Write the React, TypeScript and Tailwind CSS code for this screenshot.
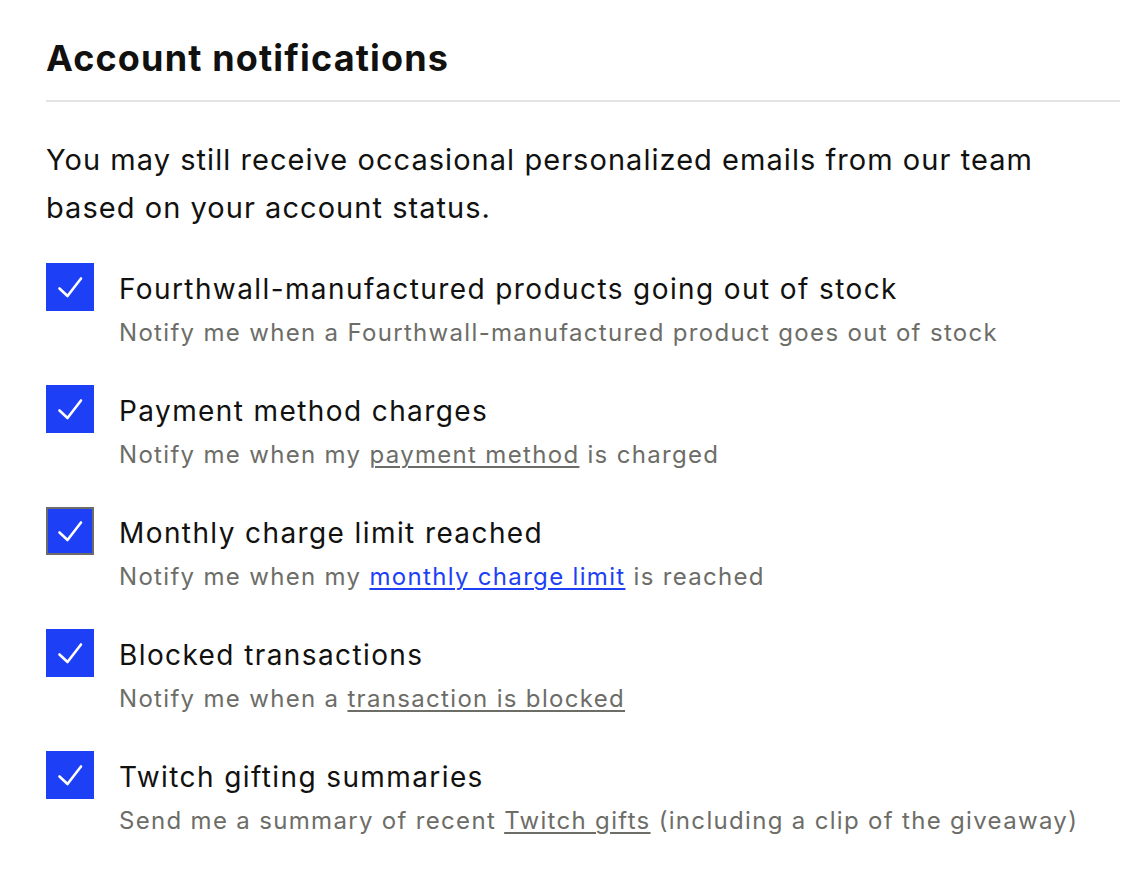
import React from "react";

const link = "underline decoration-[1.5px] underline-offset-[3px]";

const items = [
  { title: "Fourthwall-manufactured products going out of stock", desc: <>Notify me when a Fourthwall-manufactured product goes out of stock</> },
  { title: "Payment method charges", desc: <>Notify me when my <a className={link}>payment method</a> is charged</> },
  { title: "Monthly charge limit reached", desc: <>Notify me when my <a className={"text-[#1d3ff5] " + link}>monthly charge limit</a> is reached</>, focused: true },
  { title: "Blocked transactions", desc: <>Notify me when a <a className={link}>transaction is blocked</a></> },
  { title: "Twitch gifting summaries", desc: <>Send me a summary of recent <a className={link}>Twitch gifts</a> (including a clip of the giveaway)</> },
];

function Check({ focused }: { focused?: boolean }) {
  return (
    <div className={"relative h-12 w-12 shrink-0 bg-[#1d3ff5] " + (focused ? "outline-2 -outline-offset-2 outline-[#6b6b6b]" : "")}>
      <svg className="absolute inset-0" width="48" height="48" viewBox="0 0 48 48" fill="none" stroke="white" strokeWidth="2.6" strokeLinecap="round" strokeLinejoin="round">
        <path d="M13.5 25.5L21.5 33L35 15.5" />
      </svg>
    </div>
  );
}

export default function App() {
  return (
    <div className="min-h-screen bg-white px-[46px] pt-[30px] pr-[20px] text-[#111110]" style={{ fontFamily: "Inter, 'Liberation Sans', sans-serif" }}>
      <h1 className="text-[36px] font-bold leading-[56px] tracking-[0.032em]">Account notifications</h1>
      <div className="mt-[14px] h-[2px] bg-[#e3e3e3]" />
      <p className="mt-[34px] max-w-[1000px] text-[29px] leading-[48px] tracking-[0.036em]">You may still receive occasional personalized emails from our team based on your account status.</p>
      <div className="mt-[31px] flex flex-col gap-[34px]">
        {items.map((it) => (
          <div key={it.title} className="flex gap-[25px]">
            <Check focused={it.focused} />
            <div>
              <div className="text-[28px] leading-[52px] tracking-[0.05em]">{it.title}</div>
              <div className="text-[24px] leading-[36px] tracking-[0.055em] text-[#6d6d68]">{it.desc}</div>
            </div>
          </div>
        ))}
      </div>
    </div>
  );
}
